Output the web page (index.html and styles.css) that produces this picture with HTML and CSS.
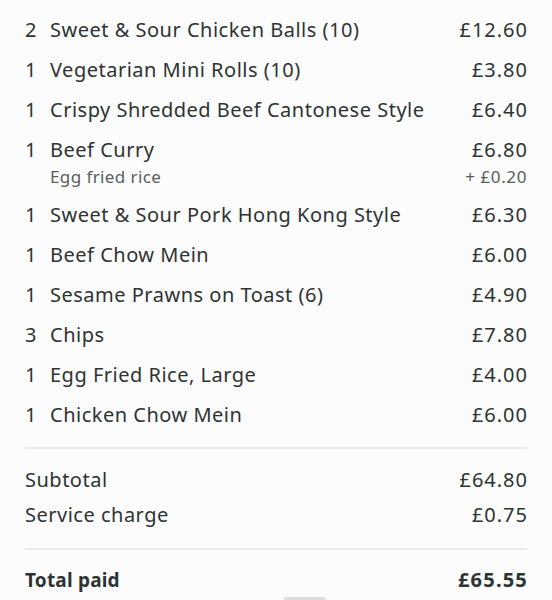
FILE: index.html
```html
<!DOCTYPE html>
<html lang="en">
<head>
<meta charset="utf-8">
<title>Order receipt</title>
<link rel="stylesheet" href="styles.css">
</head>
<body>
<div class="receipt">
  <ul class="items">
    <li class="item"><span class="qty">2</span><span class="name">Sweet &amp; Sour Chicken Balls (10)</span><span class="price">£12.60</span></li>
    <li class="item"><span class="qty">1</span><span class="name">Vegetarian Mini Rolls (10)</span><span class="price">£3.80</span></li>
    <li class="item"><span class="qty">1</span><span class="name">Crispy Shredded Beef Cantonese Style</span><span class="price">£6.40</span></li>
    <li class="item"><span class="qty">1</span><span class="name">Beef Curry</span><span class="price">£6.80</span>
      <span class="extra">Egg fried rice</span><span class="extra-price">+ £0.20</span></li>
    <li class="item"><span class="qty">1</span><span class="name">Sweet &amp; Sour Pork Hong Kong Style</span><span class="price">£6.30</span></li>
    <li class="item"><span class="qty">1</span><span class="name">Beef Chow Mein</span><span class="price">£6.00</span></li>
    <li class="item"><span class="qty">1</span><span class="name">Sesame Prawns on Toast (6)</span><span class="price">£4.90</span></li>
    <li class="item"><span class="qty">3</span><span class="name">Chips</span><span class="price">£7.80</span></li>
    <li class="item"><span class="qty">1</span><span class="name">Egg Fried Rice, Large</span><span class="price">£4.00</span></li>
    <li class="item"><span class="qty">1</span><span class="name">Chicken Chow Mein</span><span class="price">£6.00</span></li>
  </ul>

  <div class="summary">
    <div class="line"><span>Subtotal</span><span class="amount">£64.80</span></div>
    <div class="line"><span>Service charge</span><span class="amount">£0.75</span></div>
  </div>

  <div class="total">
    <span>Total paid</span><span class="amount">£65.55</span>
  </div>
</div>
<div class="handle"></div>
</body>
</html>
```

FILE: styles.css
```css
body, html {
  margin: 0;
  padding: 0;
  background: #fcfcfc;
  color: #2e3333;
  font-family: "Noto Sans", "Open Sans", sans-serif;
  font-size: 20px;
  letter-spacing: 0.5px;
  height: 100%;
  overflow: hidden;
}

.receipt {
  padding: 10px 25px 0 25px;
}

.items {
  list-style: none;
  margin: 0;
  padding: 0 0 12px 0;
  border-bottom: 2px solid #e9eaea;
}

.item {
  display: grid;
  grid-template-columns: 25px 1fr auto;
  line-height: 28px;
  padding: 6px 0;
}

.qty {
  grid-column: 1;
}

.name {
  grid-column: 2;
}

.price, .amount {
  grid-column: 3;
  text-align: right;
  letter-spacing: 1px;
  margin-right: -1px;
}

.extra, .extra-price {
  font-size: 17px;
  line-height: 25px;
  color: #585c5c;
  letter-spacing: 0.4px;
}

.extra {
  grid-column: 2;
}

.extra-price {
  grid-column: 3;
  text-align: right;
  letter-spacing: 0.6px;
}

.summary {
  padding: 13px 0 16px 0;
  border-bottom: 2px solid #e9eaea;
}

.line {
  display: flex;
  justify-content: space-between;
  line-height: 35px;
}

.total {
  display: flex;
  justify-content: space-between;
  font-size: 19px;
  font-weight: bold;
  letter-spacing: 0.2px;
  line-height: 28px;
  padding-top: 16px;
}

.total .amount {
  font-size: 20px;
  letter-spacing: 1.2px;
}

.handle {
  position: fixed;
  left: 284px;
  bottom: -2px;
  width: 42px;
  height: 5px;
  border-radius: 3px;
  background: #dcdede;
}
```
